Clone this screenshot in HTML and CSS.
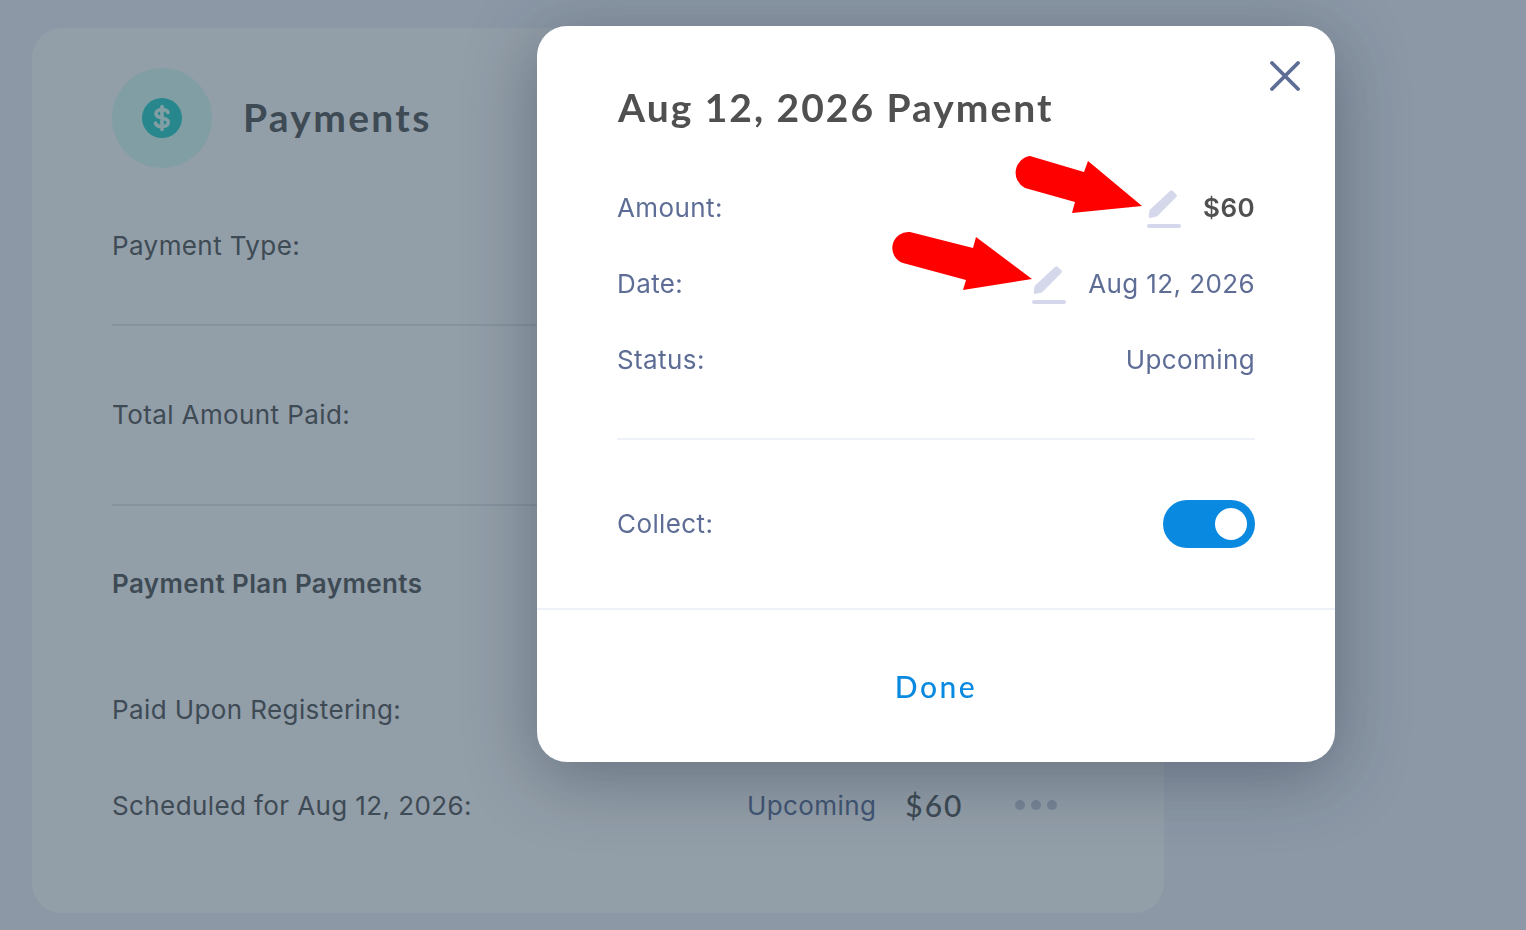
FILE: index.html
```html
<!DOCTYPE html>
<html lang="en">
<head>
  <meta charset="UTF-8">
  <title>Payment</title>
  <link rel="stylesheet" href="styles.css">
</head>
<body>
  <div class="page">
    <div class="card">
      <div class="card-head">
        <div class="icon-circle">
          <svg width="40" height="40" viewBox="0 0 40 40">
            <circle cx="20" cy="20" r="20" fill="#29d1c7"/>
            <path d="M26 14.500c-.8-2-3-3-6-3-3.400 0-6 1.600-6 4.300 0 5.700 12.300 2.700 12.300 8.500 0 2.800-2.800 4.300-6.300 4.300-3.300 0-5.600-1.200-6.500-3.400M20 8.500v23" fill="none" stroke="#dffff9" stroke-width="3.600" stroke-linecap="round"/>
          </svg>
        </div>
        <h1 class="card-title">Payments</h1>
      </div>
      <div class="section section-type">Payment Type:</div>
      <div class="section section-total">Total Amount Paid:</div>
      <div class="plan-title">Payment Plan Payments</div>
      <div class="plan-row plan-row-first">Paid Upon Registering:</div>
      <div class="plan-row">
        <span class="plan-label">Scheduled for Aug 12, 2026:</span>
        <span class="plan-status">Upcoming</span>
        <span class="plan-amount">$60</span>
        <span class="dots"><i></i><i></i><i></i></span>
      </div>
    </div>
  </div>

  <div class="overlay"></div>

  <div class="modal">
    <button class="close" type="button" aria-label="Close">
      <svg width="30" height="30" viewBox="0 0 30 30">
        <path d="M2 2l26 26M28 2L2 28" stroke="#5e6d95" stroke-width="3.800" stroke-linecap="round"/>
      </svg>
    </button>
    <div class="modal-body">
      <h2 class="modal-title">Aug 12, 2026 Payment</h2>
      <div class="rows">
        <div class="row">
          <span>Amount:</span>
          <span class="row-value">
            <svg class="edit" width="36" height="40" viewBox="0 0 36 40">
              <path d="M24 2a2 2 0 0 1 2.800 0l3.500 3.200a2 2 0 0 1 0 2.800L11.500 27a2 2 0 0 1-1 .6l-6 1.300a1.500 1.500 0 0 1-1.800-1.800l.8-5.600a2 2 0 0 1 .6-1.100z" fill="#d5d8eb"/>
              <rect x="1" y="35" width="34" height="4" rx="2" fill="#d5d8eb"/>
            </svg>
            <b>$60</b>
          </span>
        </div>
        <div class="row">
          <span>Date:</span>
          <span class="row-value">
            <svg class="edit" width="36" height="40" viewBox="0 0 36 40">
              <path d="M24 2a2 2 0 0 1 2.800 0l3.500 3.200a2 2 0 0 1 0 2.800L11.500 27a2 2 0 0 1-1 .6l-6 1.300a1.500 1.500 0 0 1-1.800-1.800l.8-5.600a2 2 0 0 1 .6-1.100z" fill="#d5d8eb"/>
              <rect x="1" y="35" width="34" height="4" rx="2" fill="#d5d8eb"/>
            </svg>
            Aug 12, 2026
          </span>
        </div>
        <div class="row">
          <span>Status:</span>
          <span>Upcoming</span>
        </div>
      </div>
      <div class="collect">
        <span class="collect-label">Collect:</span>
        <span class="toggle"><i></i></span>
      </div>
    </div>
    <div class="modal-foot">
      <button class="done" type="button">Done</button>
    </div>

    <!-- annotation arrows drawn on the screenshot -->
    <svg class="arrow arrow-one" width="136" height="70" viewBox="0 0 136 70">
      <path d="M20 6 L74 22 L78 11 L132 56 L62 63 L65 52 L15 38 A17 17 0 0 1 20 6Z" fill="#ff0000"/>
    </svg>
    <svg class="arrow arrow-two" width="150" height="70" viewBox="0 0 150 70">
      <path d="M25 7 L88 23 L91 12 L147 54 L78 65 L81 55 L18 38 A16 16 0 0 1 25 7Z" fill="#ff0000"/>
    </svg>
  </div>
</body>
</html>
```

FILE: styles.css
```css
* {
  box-sizing: border-box;
}
html, body {
  margin: 0;
  height: 100%;
}
body {
  font-family: Inter, "Liberation Sans", sans-serif;
  background: #fff;
  overflow: hidden;
}
.page {
  height: 930px;
  padding: 28px 0 17px 32px;
  background: #f3f3fb;
}
.card {
  width: 1132px;
  height: 885px;
  padding: 40px 80px 0;
  background: #fff;
  border-radius: 30px;
  color: #575757;
  font-size: 26px;
  letter-spacing: 0.4px;
}
.card-head {
  display: flex;
  align-items: center;
  gap: 31px;
  height: 100px;
}
.icon-circle {
  width: 100px;
  height: 100px;
  border-radius: 50%;
  background: #dffff9;
  display: flex;
  align-items: center;
  justify-content: center;
}
.card-title {
  margin: 0 0 2px;
  font-family: Lato, sans-serif;
  font-size: 39px;
  font-weight: 700;
  letter-spacing: 2.300px;
  color: #575757;
}
.section {
  border-bottom: 2px solid #e6e8ec;
  width: 500px;
}
.section-type {
  height: 158px;
  padding-top: 62px;
}
.section-total {
  height: 180px;
  padding-top: 73px;
}
.plan-title {
  margin-top: 62px;
  font-weight: 600;
}
.plan-row {
  display: flex;
  align-items: center;
  height: 30px;
  margin-top: 66px;
}
.plan-row-first {
  margin-top: 95px;
}
.plan-label {
  width: 635px;
}
.plan-status {
  color: #5e6d95;
  margin-right: 29px;
}
.plan-amount {
  font-family: Lato, sans-serif;
  font-size: 30px;
  font-weight: 500;
  letter-spacing: 2px;
  margin-right: 51px;
}
.dots {
  display: flex;
  gap: 6px;
}
.dots i {
  width: 10px;
  height: 10px;
  border-radius: 50%;
  background: #c9cbdd;
}
.overlay {
  position: fixed;
  inset: 0;
  background: rgba(37, 61, 81, 0.5);
}
.modal {
  position: fixed;
  left: 537px;
  top: 26px;
  width: 798px;
  height: 736px;
  background: #fff;
  border-radius: 30px;
  box-shadow: 0 14px 70px rgba(30, 40, 60, 0.38);
  color: #5e6d95;
  font-size: 26px;
  letter-spacing: 0.4px;
  display: flex;
  flex-direction: column;
}
.close {
  position: absolute;
  right: 35px;
  top: 35px;
  padding: 0;
  border: none;
  background: none;
  display: flex;
}
.modal-body {
  height: 584px;
  padding: 59px 80px 0 80px;
  border-bottom: 2px solid #eff1f9;
}
.modal-title {
  margin: 0 0 58px 1px;
  font-family: Lato, sans-serif;
  font-size: 39px;
  font-weight: 700;
  line-height: 44px;
  letter-spacing: 2px;
  color: #505050;
}
.rows {
  border-bottom: 2px solid #eff1f9;
  height: 253px;
}
.row {
  display: flex;
  justify-content: space-between;
  align-items: center;
  height: 40px;
  margin-bottom: 36px;
}
.row-value {
  display: flex;
  align-items: center;
}
.row-value b {
  font-weight: 600;
  color: #505050;
}
.edit {
  margin: 4px 21px 0 0;
}
.collect {
  display: flex;
  justify-content: space-between;
  align-items: center;
  height: 48px;
  margin-top: 60px;
}
.collect-label {
  margin-bottom: 2px;
}
.toggle {
  display: flex;
  justify-content: flex-end;
  align-items: center;
  width: 92px;
  height: 48px;
  padding-right: 8px;
  border-radius: 24px;
  background: #0a89e0;
}
.toggle i {
  width: 32px;
  height: 32px;
  border-radius: 50%;
  background: #fff;
}
.modal-foot {
  flex: 1;
  display: flex;
  align-items: center;
  justify-content: center;
}
.done {
  border: none;
  background: none;
  padding: 0;
  font-family: Lato, sans-serif;
  font-size: 30px;
  font-weight: 500;
  letter-spacing: 2.500px;
  color: #0a89e0;
}
.arrow {
  position: absolute;
}
.arrow-one {
  left: 473px;
  top: 124px;
}
.arrow-two {
  left: 348px;
  top: 199px;
}
```
